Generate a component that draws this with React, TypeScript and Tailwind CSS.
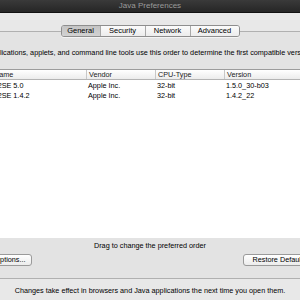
import React from "react";

const font = { fontFamily: '"Liberation Sans", Arial, sans-serif' };
const T = "text-[7.25px] leading-none";

function Tabs() {
  const tabs = [
    { label: "General", w: "w-[38px]", sel: true },
    { label: "Security", w: "w-[45px]", sel: false },
    { label: "Network", w: "w-[45px]", sel: false },
    { label: "Advanced", w: "w-[49px]", sel: false },
  ];
  return (
    <div className="relative z-10 flex justify-center h-[12px] -mb-[6px]">
      <div className="flex h-[12px] rounded-[3px] border border-[#8e8e8e] overflow-hidden shadow-[0_1px_0_rgba(255,255,255,0.6)]">
        {tabs.map((t, i) => (
          <div
            key={t.label}
            className={
              "flex items-center justify-center text-black text-[7.5px] leading-none " +
              t.w +
              (i > 0 ? " border-l border-[#a8a8a8]" : "") +
              (t.sel
                ? " bg-gradient-to-b from-[#c4c4c4] to-[#d2d2d2]"
                : " bg-gradient-to-b from-[#fbfbfb] to-[#ececec]")
            }
          >
            {t.label}
          </div>
        ))}
      </div>
    </div>
  );
}

function Table() {
  const rows = [
    ["J2SE 5.0", "Apple Inc.", "32-bit", "1.5.0_30-b03"],
    ["J2SE 1.4.2", "Apple Inc.", "32-bit", "1.4.2_22"],
  ];
  const cols = ["w-[98px]", "w-[69px]", "w-[69px]", "flex-1"];
  return (
    <div className="mt-[11px] mx-[8px] h-[169px] bg-white border-t border-[#9c9c9c]">
      <div className="flex h-[10px] bg-gradient-to-b from-[#ffffff] to-[#ececec] border-b border-[#b4b4b4]">
        {["Name", "Vendor", "CPU-Type", "Version"].map((h, i) => (
          <div
            key={h}
            className={
              cols[i] +
              " flex items-center text-[#1a1a1a] " +
              T +
              (i > 0 ? " border-l border-[#c8c8c8] pl-[2px]" : " pl-[6px]")
            }
          >
            {h}
          </div>
        ))}
      </div>
      <div className="pt-[1px]">
        {rows.map((r) => (
          <div key={r[0]} className="flex h-[10px]">
            {r.map((c, i) => (
              <div
                key={i}
                className={
                  cols[i] +
                  " flex items-center text-black " +
                  T +
                  (i === 0 ? " pl-[6px]" : " pl-[2px]")
                }
              >
                {c}
              </div>
            ))}
          </div>
        ))}
      </div>
    </div>
  );
}

export default function App() {
  return (
    <div className="w-[300px] h-[300px] overflow-hidden bg-[#e8e8e8]" style={font}>
      <div className="w-[340px] -ml-[20px] flex flex-col">
        <div className="h-[13px] bg-gradient-to-b from-[#3a3a3a] to-[#262626] border-b border-[#111] flex items-center justify-center">
          <span className="text-[8px] leading-none text-[#9a9a9a]">Java Preferences</span>
        </div>
        <div className="pt-[12px]">
          <Tabs />
          <div className="bg-[#e3e3e3] border-t border-b border-[#b0b0b0] pt-[16px] pb-[12px]">
            <div className={"h-[10px] pl-[7px] flex items-center whitespace-nowrap text-black " + T}>
              Applications, applets, and command line tools use this order to determine the first compatible version:
            </div>
            <Table />
            <div className={"mt-[3px] h-[10px] flex items-center justify-center text-black " + T}>
              Drag to change the preferred order
            </div>
            <div className="mt-[3px] pl-[8px] pr-[4px] flex justify-between">
              <div className={"w-[44px] h-[12px] rounded-[3px] border border-[#9a9a9a] bg-gradient-to-b from-[#ffffff] to-[#ececec] flex items-center justify-center whitespace-nowrap text-black " + T}>
                Options...
              </div>
              <div className={"w-[73px] h-[12px] rounded-[3px] border border-[#9a9a9a] bg-gradient-to-b from-[#ffffff] to-[#ececec] flex items-center justify-center whitespace-nowrap text-black " + T}>
                Restore Defaults
              </div>
            </div>
          </div>
          <div className={"pt-[7px] h-[10px] box-content flex items-center justify-center text-black whitespace-nowrap " + T}>
            Changes take effect in browsers and Java applications the next time you open them.
          </div>
        </div>
      </div>
    </div>
  );
}
